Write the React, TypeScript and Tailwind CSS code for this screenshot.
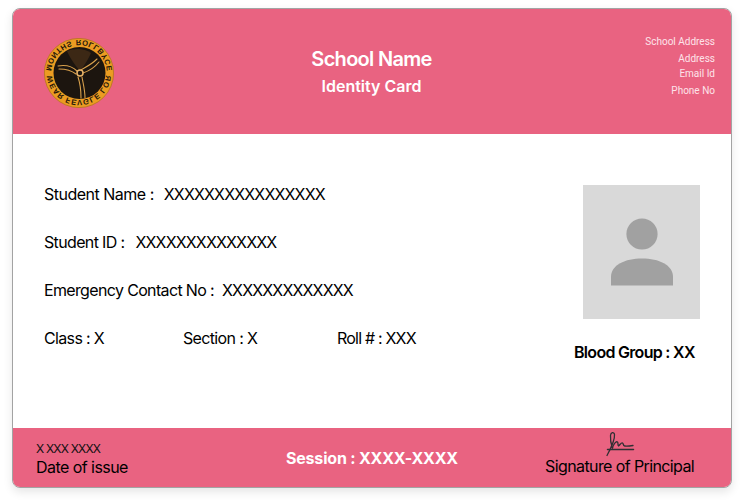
import React from "react";

function Logo() {
  return (
    <svg width="70" height="70" viewBox="0 0 70 70" className="block shrink-0">
      <defs>
        <path id="topArc" d="M8 35a27 27 0 0 1 54 0a27 27 0 0 1 -54 0" />
        <path id="botArc" d="M2 35a33 33 0 0 0 66 0a33 33 0 0 0 -66 0" />
      </defs>
      <circle cx="35" cy="35" r="34.6" fill="#eb9c22" stroke="#b5761c" strokeWidth="0.8" />
      <circle cx="35.5" cy="35" r="26" fill="#1c150f" />
      <path d="M36 33C30 26 25 18 23 13C30 10 41 10 47 15C44 22 40 28 36 33Z" fill="#4a3018" opacity="0.7" />
      <g fill="none" stroke="#d8a04c" strokeWidth="1.1" strokeLinecap="round">
        <path d="M37 32C42 29 48 26 53 21" />
        <path d="M39 35C45 33 51 29 55 24" />
        <path d="M33 33C27 27 20 27 14 28" />
        <path d="M32 36C27 32 21 31 15 31" />
        <path d="M34 39C36 45 37 52 37 60" />
        <path d="M38 39C39 45 41 52 41 60" />
      </g>
      <circle cx="36" cy="35" r="3" fill="#1c150f" stroke="#eab469" strokeWidth="1.5" />
      <g transform="translate(0 70) scale(1 -1)" fill="#24160a" fontSize="7.6" fontWeight="700" fontFamily="'Liberation Sans', sans-serif">
        <text>
          <textPath href="#botArc" startOffset="25%" textAnchor="middle" textLength="98" lengthAdjust="spacing">MONTHS ROLLBYCE</textPath>
        </text>
        <text>
          <textPath href="#topArc" startOffset="25%" textAnchor="middle" textLength="80" lengthAdjust="spacing">WEAR FEVGLE LOR</textPath>
        </text>
      </g>
    </svg>
  );
}

function Signature() {
  return (
    <svg width="30" height="26" viewBox="0 0 30 26" fill="none" stroke="#2f2f33" strokeWidth="1.3" strokeLinecap="round" strokeLinejoin="round" className="block">
      <path d="M2 24.5C5.5 18 10 8 9.5 3.5C9 0.5 5.8 1 5.5 4.5C5.2 8 6 13 7.5 17" />
      <path d="M7.5 17C8.5 13 11 10 12.5 11C13.5 12 12.5 14.5 13.5 15C15 14 16 11.5 17.5 12C18.5 12.5 18 14.5 19.5 15C21.5 15.3 25 15 28 14.5" />
      <path d="M2.5 18.5H28.5" strokeWidth="1.5" />
    </svg>
  );
}

export default function App() {
  return (
    <div className="w-[744px] h-[504px] bg-white pt-2 px-3 font-['Inter',sans-serif] text-black">
      <div className="w-[720px] h-[480px] flex flex-col rounded-[8px] overflow-hidden border border-[#a3a3a3] bg-white shadow-[0_4px_10px_rgba(0,0,0,0.1)]">
        <header className="h-[125px] shrink-0 bg-[#e96381] flex items-start pl-[31px] pr-[16px] text-white">
          <div className="w-[70px] mt-[29px]"><Logo /></div>
          <div className="flex-1 flex flex-col items-center pt-[36px] pr-[16px]">
            <div className="text-[20px] leading-[28px] font-semibold tracking-[-0.7px]">School Name</div>
            <div className="text-[16px] leading-[24px] font-semibold mt-[1px]">Identity Card</div>
          </div>
          <div className="w-[70px] pt-[27px] flex flex-col items-end font-['Roboto',sans-serif] text-[10px] leading-[12px] text-[#fde3ea] whitespace-nowrap">
            <div>School Address</div>
            <div className="mt-[5px]">Address</div>
            <div className="mt-[3px]">Email Id</div>
            <div className="mt-[5px]">Phone No</div>
          </div>
        </header>
        <main className="flex-1 flex pl-[31px]">
          <div className="flex-1 pt-[48px] text-[16px] leading-[24px] tracking-[-0.65px]">
            <div className="flex gap-[10px]"><span className="tracking-[-0.5px]">Student Name :</span><span className="tracking-[-0.85px]">XXXXXXXXXXXXXXXX</span></div>
            <div className="flex gap-[11px] mt-[24px]"><span>Student ID :</span><span className="tracking-[-0.85px]">XXXXXXXXXXXXXX</span></div>
            <div className="flex gap-[8px] mt-[24px]"><span>Emergency Contact No :</span><span className="tracking-[-0.85px]">XXXXXXXXXXXXX</span></div>
            <div className="flex mt-[24px]">
              <span className="w-[139px]">Class : X</span>
              <span className="w-[154px]">Section : X</span>
              <span className="tracking-[-0.8px]">Roll # : XXX</span>
            </div>
          </div>
          <div className="w-[148px] shrink-0 pt-[51px] flex flex-col">
            <div className="w-[117px] h-[134px] bg-[#d9d9d9] flex flex-col items-center pt-[33px]">
              <svg width="62" height="68" viewBox="0 0 62 68" fill="#a1a1a1" className="block">
                <circle cx="31" cy="16" r="15.6" />
                <path d="M0 67.5V59C0 47 14 40.5 31 40.5S62 47 62 59V67.5Z" />
              </svg>
            </div>
            <div className="mt-[21px] -ml-[9px] text-[16px] leading-[24px] font-semibold tracking-[-0.7px] whitespace-nowrap">Blood Group : XX</div>
          </div>
        </main>
        <footer className="h-[59px] shrink-0 bg-[#e96381] flex items-start pl-[23px] pt-[3px]">
          <div className="w-[250px] pt-[10px]">
            <div className="text-[12px] leading-[16px] text-[#111] tracking-[-0.8px]">X XXX XXXX</div>
            <div className="text-[16px] leading-[20px] tracking-[-0.55px]">Date of issue</div>
          </div>
          <div className="w-[259px] pt-[15px] text-[16px] leading-[24px] font-bold tracking-[-0.2px] text-white whitespace-nowrap">Session : XXXX-XXXX</div>
          <div className="flex flex-col items-center">
            <Signature />
            <div className="text-[16px] leading-[20px] -mt-[1px] tracking-[-0.6px] whitespace-nowrap">Signature of Principal</div>
          </div>
        </footer>
      </div>
    </div>
  );
}
